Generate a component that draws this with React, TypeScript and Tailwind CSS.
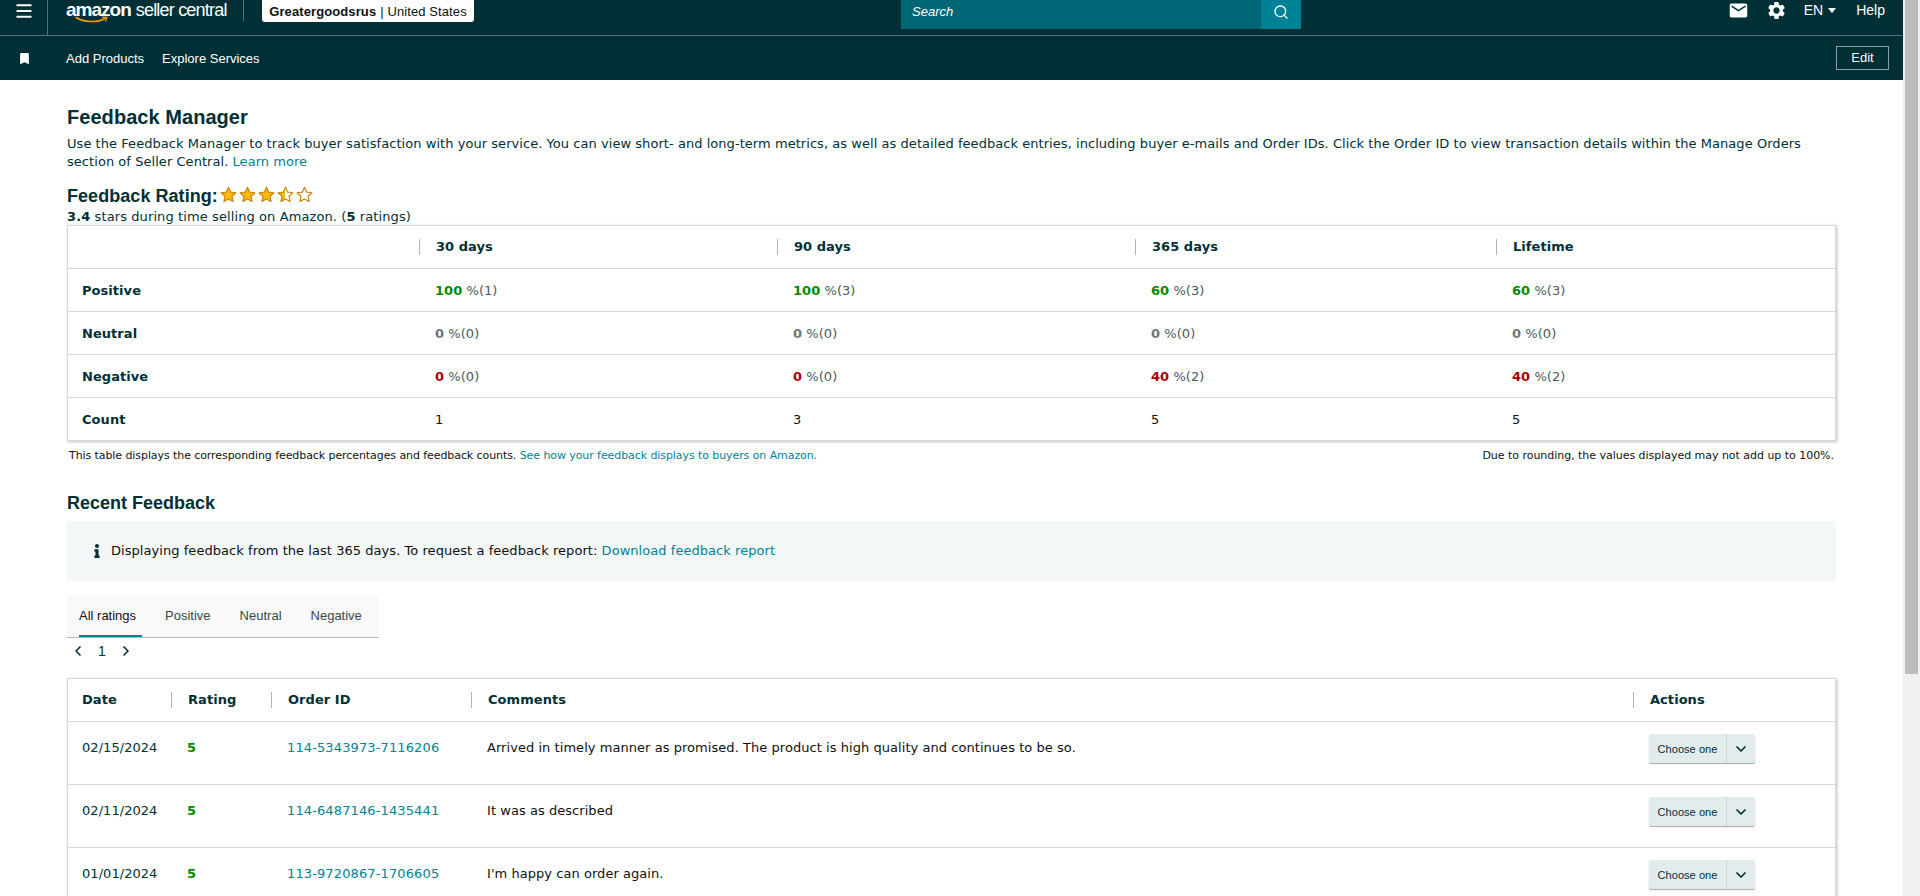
import { ChevronDown, ChevronLeft, ChevronRight, Menu, Search } from "lucide-react";
import { MdBookmark, MdEmail, MdSettings } from "react-icons/md";
import { FaInfo } from "react-icons/fa";

const SUMMARY = [
  { label: "Positive", tone: "text-[#008a00]", cells: [["100", "(1)"], ["100", "(3)"], ["60", "(3)"], ["60", "(3)"]] },
  { label: "Neutral", tone: "text-[#6c7778]", cells: [["0", "(0)"], ["0", "(0)"], ["0", "(0)"], ["0", "(0)"]] },
  { label: "Negative", tone: "text-[#a80000]", cells: [["0", "(0)"], ["0", "(0)"], ["40", "(2)"], ["40", "(2)"]] },
];

const FEEDBACK = [
  { date: "02/15/2024", id: "114-5343973-7116206", comment: "Arrived in timely manner as promised. The product is high quality and continues to be so." },
  { date: "02/11/2024", id: "114-6487146-1435441", comment: "It was as described" },
  { date: "01/01/2024", id: "113-9720867-1706605", comment: "I'm happy can order again." },
];

function Star({ fill }: { fill: "full" | "half" | "empty" }) {
  const color = fill === "full" ? "#fbb80f" : fill === "half" ? "url(#half-star)" : "#ffffff";
  return (
    <svg width="17" height="17" viewBox="0 0 24 24">
      <defs>
        <linearGradient id="half-star">
          <stop offset="50%" stopColor="#fbb80f" />
          <stop offset="50%" stopColor="#ffffff" />
        </linearGradient>
      </defs>
      <path
        d="M12 1.8l3.1 6.9 7.4.8-5.5 5 1.5 7.4L12 18.2l-6.5 3.7L7 14.5l-5.5-5 7.4-.8z"
        fill={color}
        stroke="#c9820e"
        strokeWidth="1.6"
        strokeLinejoin="round"
      />
    </svg>
  );
}

function HeadCell({ children }: { children: React.ReactNode }) {
  return (
    <div className="flex h-full items-center">
      <span className="h-4 w-px shrink-0 bg-[#aab7b8]" />
      <span className="pl-4 font-bold text-[#002f36]">{children}</span>
    </div>
  );
}

function TopBar() {
  return (
    <header className="h-[80px] w-full bg-[#002f36] font-['Liberation_Sans',sans-serif] text-white">
      <div className="flex h-[36px] items-start border-b border-[#56707a]">
        <div className="flex h-[35px] w-[48px] items-start justify-center border-r border-[#56707a] pt-[1px]">
          <Menu size={20} strokeWidth={2.4} />
        </div>
        <div className="relative ml-[18px] flex w-[159px] items-baseline whitespace-nowrap">
          <span className="text-[19px] leading-[20px] font-bold tracking-[-1px]">amazon</span>
          <span className="ml-[5px] text-[18px] leading-[20px] tracking-[-0.8px]">seller central</span>
          <svg className="absolute top-[16px] left-[9px]" width="34" height="8" viewBox="0 0 34 8">
            <path d="M1 1.5C9 6.5 22 7 30 2.5" fill="none" stroke="#ff9900" strokeWidth="1.5" strokeLinecap="round" />
            <path d="M27 1.2l5 .2-1.6 4.2" fill="none" stroke="#ff9900" strokeWidth="1.2" />
          </svg>
        </div>
        <span className="ml-[18px] h-[21px] w-px bg-[#56707a]" />
        <div className="ml-[18px] flex h-[22px] w-[212px] items-center justify-center rounded-b-[3px] bg-white pt-[1px] text-[13px] tracking-[0.1px] text-[#0f1111]">
          <span className="font-bold">Greatergoodsrus</span>
          <span className="ml-1">| United States</span>
        </div>
        <div className="ml-[427px] flex h-[29px] w-[400px]">
          <div className="flex flex-1 items-center bg-[#006574] pb-[5px] pl-[11px] text-[13px] italic">Search</div>
          <div className="flex w-[40px] items-center justify-center bg-[#008296] pb-[6px]">
            <Search size={16} strokeWidth={2} />
          </div>
        </div>
        <div className="ml-auto flex h-[21px] items-center pr-[18px] text-[14px]">
          <MdEmail size={21} />
          <MdSettings size={21} className="ml-[17px]" />
          <span className="ml-[17px]">EN</span>
          <span className="ml-[5px] h-0 w-0 border-x-[4px] border-t-[5px] border-x-transparent border-t-white" />
          <span className="ml-[20px]">Help</span>
        </div>
      </div>
      <div className="flex h-[44px] items-center text-[13px]">
        <div className="flex w-[48px] justify-center">
          <MdBookmark size={15} />
        </div>
        <span className="mt-[2px] ml-[18px]">Add Products</span>
        <span className="mt-[2px] ml-[18px]">Explore Services</span>
        <div className="mr-[14px] ml-auto flex h-[24px] w-[53px] items-center justify-center border border-[#8b9fa3]">
          Edit
        </div>
      </div>
    </header>
  );
}

function SummaryTable() {
  return (
    <div className="-mt-[1px] border border-[#d5dbdb] shadow-[1px_1px_3px_rgba(0,0,0,0.25)]">
      <div className="grid h-[43px] grid-cols-[351px_358px_358px_361px_1fr] items-center border-b border-[#d5dbdb]">
        <span />
        {["30 days", "90 days", "365 days", "Lifetime"].map((h) => (
          <HeadCell key={h}>{h}</HeadCell>
        ))}
      </div>
      {SUMMARY.map((row) => (
        <div
          key={row.label}
          className="grid h-[43px] grid-cols-[351px_358px_358px_361px_1fr] items-center border-b border-[#d5dbdb] pt-[2px]"
        >
          <span className="pl-[14px] font-bold text-[#002f36]">{row.label}</span>
          {row.cells.map(([pct, count], i) => (
            <span key={i} className="pl-[16px]">
              <b className={row.tone}>{pct}</b> <span className="text-[#4a5a5c]">%{count}</span>
            </span>
          ))}
        </div>
      ))}
      <div className="grid h-[42px] grid-cols-[351px_358px_358px_361px_1fr] items-center pt-[2px]">
        <span className="pl-[14px] font-bold text-[#002f36]">Count</span>
        {["1", "3", "5", "5"].map((c, i) => (
          <span key={i} className="pl-[16px]">
            {c}
          </span>
        ))}
      </div>
    </div>
  );
}

function FeedbackTable() {
  return (
    <div className="mt-[14px] border border-[#d5dbdb] shadow-[1px_1px_3px_rgba(0,0,0,0.25)]">
      <div className="grid h-[43px] grid-cols-[103px_100px_200px_1162px_1fr] items-center border-b border-[#d5dbdb]">
        <span className="pl-[14px] font-bold text-[#002f36]">Date</span>
        <HeadCell>Rating</HeadCell>
        <HeadCell>Order ID</HeadCell>
        <HeadCell>Comments</HeadCell>
        <HeadCell>Actions</HeadCell>
      </div>
      {FEEDBACK.map((row) => (
        <div
          key={row.id}
          className="grid h-[63px] grid-cols-[103px_100px_200px_1162px_1fr] border-b border-[#d5dbdb] pt-[17px]"
        >
          <span className="pl-[14px] text-[#002f36]">{row.date}</span>
          <span className="pl-4 font-bold text-[#008a00]">5</span>
          <a className="pl-4 tracking-[0.12px] text-[#008296]">{row.id}</a>
          <span className="pl-4">{row.comment}</span>
          <div className="-mt-[5px] ml-[16px] flex h-[29px] w-[106px] rounded-[2px] bg-[#e3ecec] font-['Liberation_Sans',sans-serif] text-[#002f36] shadow-[0_1px_1px_rgba(0,0,0,0.35)]">
            <span className="flex w-[78px] items-center justify-center border-r border-[#ccd6d6] text-[11px]">
              Choose one
            </span>
            <span className="flex flex-1 items-center justify-center">
              <ChevronDown size={16} strokeWidth={2.5} />
            </span>
          </div>
        </div>
      ))}
    </div>
  );
}

export default function App() {
  return (
    <div className="flex h-screen overflow-hidden bg-white">
      <div className="min-w-0 flex-1">
        <TopBar />
        <main className="pr-[67px] pl-[67px] font-['DejaVu_Sans',sans-serif] text-[13px] leading-[18px] tracking-[0.05px] text-[#0f1111]">
          <h1 className="mt-[27px] font-['Liberation_Sans',sans-serif] text-[20px] leading-[20px] font-bold text-[#002f36]">
            Feedback Manager
          </h1>
          <p className="mt-[8px] text-[#002f36]">
            Use the Feedback Manager to track buyer satisfaction with your service. You can view short- and long-term
            metrics, as well as detailed feedback entries, including buyer e-mails and Order IDs. Click the Order ID to
            view transaction details within the Manage Orders section of Seller Central.{" "}
            <a className="text-[#008296]">Learn more</a>
          </p>
          <div className="mt-[15px] flex h-[20px] items-center">
            <h2 className="font-['Liberation_Sans',sans-serif] text-[18px] font-bold text-[#002f36]">
              Feedback Rating:
            </h2>
            <div className="mb-[4px] ml-[2px] flex gap-[2px]">
              <Star fill="full" />
              <Star fill="full" />
              <Star fill="full" />
              <Star fill="half" />
              <Star fill="empty" />
            </div>
          </div>
          <p className="pt-[2px] tracking-[0.1px] text-[#002f36]">
            <b>3.4</b> stars during time selling on Amazon. (<b>5</b> ratings)
          </p>
          <SummaryTable />
          <div className="mt-[7px] flex justify-between pr-[2px] pl-[2px] text-[11px] leading-[16px] tracking-[-0.08px]">
            <span>
              This table displays the corresponding feedback percentages and feedback counts.{" "}
              <a className="text-[#008296]">See how your feedback displays to buyers on Amazon.</a>
            </span>
            <span className="tracking-[-0.03px]">Due to rounding, the values displayed may not add up to 100%.</span>
          </div>
          <h2 className="mt-[28px] font-['Liberation_Sans',sans-serif] text-[18px] leading-[22px] font-bold tracking-normal text-[#002f36]">
            Recent Feedback
          </h2>
          <div className="mt-[7px] flex h-[60px] items-center bg-[#f3f7f7] pl-[23px]">
            <FaInfo size={14} className="text-[#002f36]" />
            <span className="ml-[7px]">
              Displaying feedback from the last 365 days. To request a feedback report:{" "}
              <a className="text-[#008296]">Download feedback report</a>
            </span>
          </div>
          <div className="mt-[14px] flex h-[43px] w-[312px] items-stretch border-b border-[#b8b8b8] bg-[#f9f9f9] pl-[12px] font-['Liberation_Sans',sans-serif] text-[13px] tracking-normal text-[#33494e]">
            <span className="mr-[23px] flex items-center border-b-2 border-[#008296] pt-[2px] pr-[6px] text-[#0f1111]">
              All ratings
            </span>
            <span className="mr-[29px] flex items-center">Positive</span>
            <span className="mr-[29px] flex items-center">Neutral</span>
            <span className="flex items-center">Negative</span>
          </div>
          <div className="flex h-[26px] items-center pl-[3px] font-['Liberation_Sans',sans-serif] text-[14px] text-[#002f36]">
            <ChevronLeft size={16} strokeWidth={2.5} />
            <span className="ml-[12px]">1</span>
            <ChevronRight size={16} strokeWidth={2.5} className="ml-[12px]" />
          </div>
          <FeedbackTable />
        </main>
      </div>
      <div className="w-[17px] shrink-0 bg-[#f0f0f0] px-[2px]">
        <div className="h-[674px] bg-[#bcbcbc]" />
      </div>
    </div>
  );
}
